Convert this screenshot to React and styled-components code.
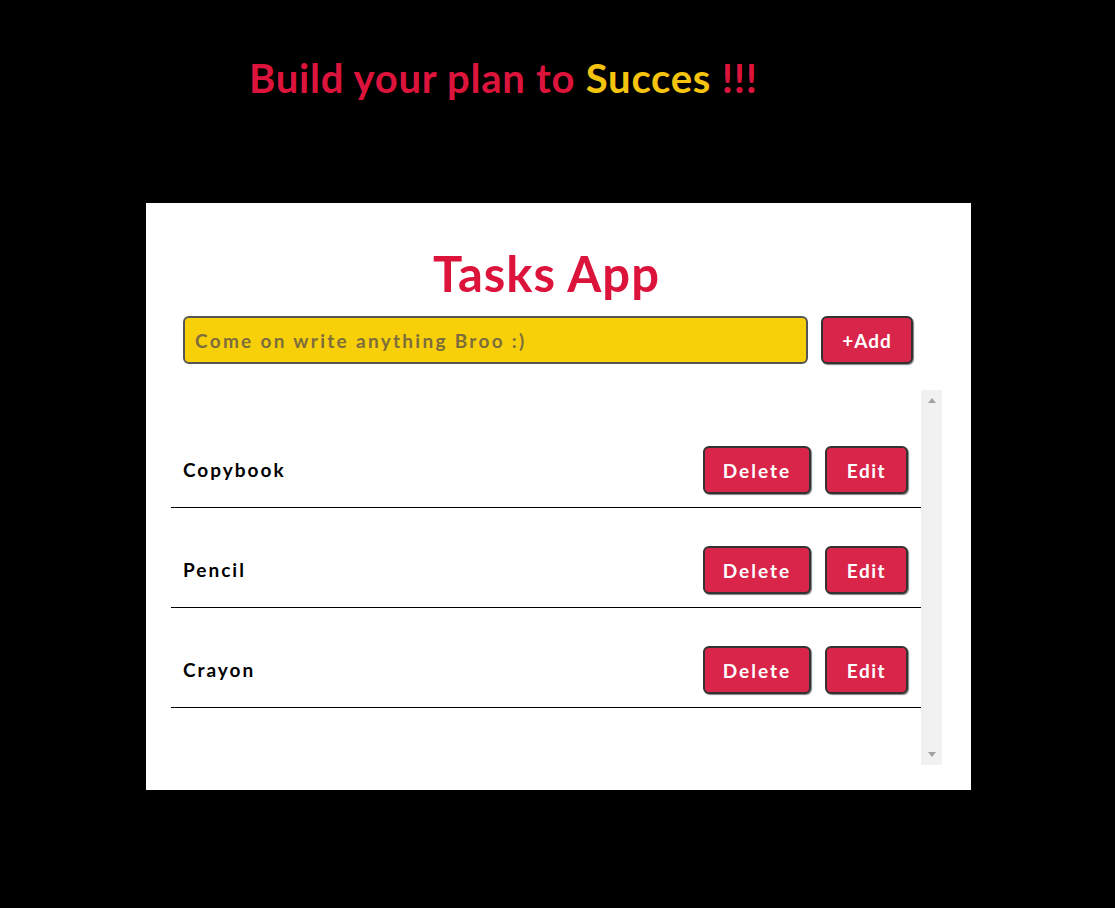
import React from "react";
import styled, { createGlobalStyle } from "styled-components";

const Global = createGlobalStyle`
  html, body { margin: 0; padding: 0; background: #000; }
  body { font-family: "Lato", "Open Sans", sans-serif; }
`;

const Page = styled.div`
  width: 1115px;
  height: 908px;
  background: #000;
  display: flex;
  flex-direction: column;
  overflow: hidden;
`;

const Headline = styled.h1`
  margin: 52px 0 0 249px;
  font-size: 40px;
  line-height: 52px;
  font-weight: 700;
  color: #dc143c;
  letter-spacing: 0.75px;
`;

const Gold = styled.span`
  color: #f5c40e;
`;

const Card = styled.div`
  margin: 99px 0 0 146px;
  width: 825px;
  height: 587px;
  background: #fff;
  box-sizing: border-box;
  padding: 40px 29px 25px 25px;
  display: flex;
  flex-direction: column;
`;

const Title = styled.h2`
  margin: 0 0 0 -20px;
  text-align: center;
  font-size: 49px;
  line-height: 60px;
  font-weight: 700;
  letter-spacing: 1px;
  color: #dc143c;
`;

const Form = styled.div`
  display: flex;
  gap: 13px;
  margin: 13px 0 0 12px;
`;

const Input = styled.input`
  width: 625px;
  height: 48px;
  box-sizing: border-box;
  background: #f8d00a;
  border: 2px solid #555;
  border-radius: 6px;
  padding: 0 10px;
  font-family: "Lato", sans-serif;
  font-weight: 700;
  font-size: 19px;
  letter-spacing: 2.3px;
  color: #333;
  outline: none;
  &::placeholder { color: #7d6d3b; }
`;

const Button = styled.button`
  width: ${(p) => p.$w}px;
  height: 48px;
  box-sizing: border-box;
  background: #d9254a;
  border: 2px solid #333;
  border-radius: 6px;
  box-shadow: 1px 1px 1px rgba(0,0,0,0.5);
  color: #fff;
  font-family: "Lato", sans-serif;
  font-weight: 700;
  font-size: 19px;
  letter-spacing: ${(p) => p.$ls || 1.5}px;
  cursor: pointer;
  padding: 0;
`;

const ListWrap = styled.div`
  margin-top: 26px;
  display: flex;
  height: 375px;
`;

const List = styled.div`
  width: 750px;
  padding-top: 18px;
`;

const Row = styled.div`
  height: 100px;
  box-sizing: border-box;
  border-bottom: 1px solid #000;
  display: flex;
  align-items: flex-end;
  padding: 0 13px 13px 12px;
  gap: 14px;
`;

const Name = styled.span`
  flex: 1;
  align-self: flex-end;
  line-height: 48px;
  font-size: 19px;
  font-weight: 700;
  letter-spacing: 2px;
  color: #000;
`;

const Scrollbar = styled.div`
  width: 21px;
  background: #f1f1f1;
  display: flex;
  flex-direction: column;
  justify-content: space-between;
  align-items: center;
  padding: 8px 0;
  box-sizing: border-box;
`;

const Arrow = styled.div`
  width: 0;
  height: 0;
  border-left: 4px solid transparent;
  border-right: 4px solid transparent;
  ${(p) =>
    p.$up
      ? "border-bottom: 5px solid #a3a3a3;"
      : "border-top: 5px solid #a3a3a3;"}
`;

const tasks = ["Copybook", "Pencil", "Crayon"];

export default function App() {
  return (
    <Page>
      <Global />
      <Headline>
        Build your plan to <Gold>Succes</Gold> !!!
      </Headline>
      <Card>
        <Title>Tasks App</Title>
        <Form>
          <Input placeholder="Come on write anything Broo :)" />
          <Button $w={92} $ls={1}>+Add</Button>
        </Form>
        <ListWrap>
          <List>
            {tasks.map((t) => (
              <Row key={t}>
                <Name>{t}</Name>
                <Button $w={108} $ls={2}>Delete</Button>
                <Button $w={83}>Edit</Button>
              </Row>
            ))}
          </List>
          <Scrollbar>
            <Arrow $up />
            <Arrow />
          </Scrollbar>
        </ListWrap>
      </Card>
    </Page>
  );
}
